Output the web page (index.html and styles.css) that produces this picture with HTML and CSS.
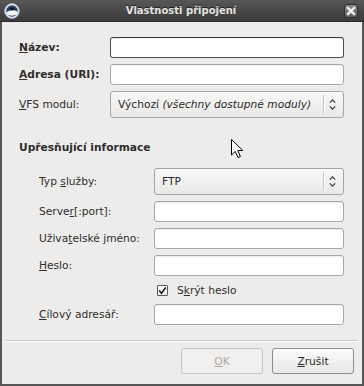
FILE: index.html
```html
<!DOCTYPE html>
<html lang="cs">
<head>
<meta charset="utf-8">
<title>Vlastnosti připojení</title>
<link rel="stylesheet" href="styles.css">
</head>
<body>
<div class="window">
  <div class="titlebar">
    <svg class="app-icon" width="16" height="16" viewBox="0 0 16 16">
      <circle cx="8" cy="8" r="7.4" fill="#e9eef3" stroke="#9fb3c8" stroke-width="0.8"/>
      <circle cx="8" cy="8" r="5.8" fill="#2b4565"/>
      <path d="M2.4 9.6 C5 7.2 9 6.6 13.6 8.4 L13.4 10.6 C11.5 13.4 4.6 13.6 2.6 10.6 Z" fill="#f4f7fa"/>
      <path d="M5 5.2 L9.8 4 L11.4 6.6 L7.4 7.4 Z" fill="#0e1a2a"/>
    </svg>
    <span class="title">Vlastnosti připojení</span>
    <span class="close">
      <svg width="14" height="14" viewBox="0 0 14 14">
        <path d="M4 4 L10 10 M10 4 L4 10" stroke="#f2f2f2" stroke-width="2.4" stroke-linecap="square"/>
      </svg>
    </span>
  </div>
  <div class="frame">
    <div class="form form-main">
      <label class="lbl lbl-bold"><u>N</u>ázev:</label>
      <div class="entry entry-focus"></div>
      <label class="lbl lbl-bold"><u>A</u>dresa (URI):</label>
      <div class="entry"></div>
      <label class="lbl"><u>V</u>FS modul:</label>
      <div class="combo">
        <span class="combo-text">Výchozí <i>(všechny dostupné moduly)</i></span>
        <span class="combo-sep"></span>
        <svg class="combo-arrows" width="7" height="13" viewBox="0 0 7 13">
          <path d="M0.8 4.6 L3.5 1.8 L6.2 4.6 M0.8 8.4 L3.5 11.2 L6.2 8.4" fill="none" stroke="#3a3a3a" stroke-width="1.2"/>
        </svg>
      </div>
    </div>
    <div class="heading">Upřesňující informace</div>
    <div class="form form-sub">
      <label class="lbl">Typ <u>s</u>lužby:</label>
      <div class="combo">
        <span class="combo-text">FTP</span>
        <span class="combo-sep"></span>
        <svg class="combo-arrows" width="7" height="13" viewBox="0 0 7 13">
          <path d="M0.8 4.6 L3.5 1.8 L6.2 4.6 M0.8 8.4 L3.5 11.2 L6.2 8.4" fill="none" stroke="#3a3a3a" stroke-width="1.2"/>
        </svg>
      </div>
      <label class="lbl">Serve<u>r</u>[:port]:</label>
      <div class="entry"></div>
      <label class="lbl">Uživa<u>t</u>elské jméno:</label>
      <div class="entry"></div>
      <label class="lbl"><u>H</u>eslo:</label>
      <div class="entry"></div>
      <span class="empty"></span>
      <div class="check-row">
        <span class="checkbox">
          <svg width="9" height="9" viewBox="0 0 9 9">
            <path d="M1.2 4.6 L3.4 7.2 L7.8 1.4" fill="none" stroke="#1a1a1a" stroke-width="1.6"/>
          </svg>
        </span>
        <span class="check-label">S<u>k</u>rýt heslo</span>
      </div>
      <label class="lbl"><u>C</u>ílový adresář:</label>
      <div class="entry"></div>
    </div>
    <div class="separator"></div>
    <div class="actions">
      <button class="btn" disabled><u>O</u>K</button>
      <button class="btn btn-active"><u>Z</u>rušit</button>
    </div>
  </div>
  <svg class="cursor" width="13" height="20" viewBox="0 0 13 20">
    <path d="M0.5 0.5 L0.5 16 L4.3 12.4 L7 18.6 L9.4 17.6 L6.8 11.5 L11.8 11.5 Z" fill="#fff" stroke="#000" stroke-width="1" stroke-linejoin="miter"/>
  </svg>
</div>
</body>
</html>
```

FILE: styles.css
```css
* { box-sizing: border-box; }

html, body {
  margin: 0;
  padding: 0;
  background: #edeceb;
}

body {
  font-family: "DejaVu Sans", "Liberation Sans", sans-serif;
  font-size: 10.67px;
  color: #2e2e2e;
}

.window {
  position: relative;
  width: 364px;
  height: 386px;
  display: flex;
  flex-direction: column;
  overflow: hidden;
}

.titlebar {
  height: 22px;
  flex: none;
  display: flex;
  align-items: center;
  padding: 0 6px 0 4px;
  background: linear-gradient(#575757, #3b3b3b);
  border-bottom: 1px solid #2c2c2c;
}

.app-icon { flex: none; }

.title {
  flex: 1;
  text-align: center;
  font-weight: bold;
  font-size: 10px;
  color: #e6e4e0;
  text-shadow: 0 -1px 0 #222;
  padding-right: 2px;
}

.close {
  flex: none;
  width: 14px;
  height: 14px;
  border: 1px solid #2e2e2e;
  border-radius: 3px;
  background: linear-gradient(#8a8a8a, #5e5e5e);
  display: flex;
  align-items: center;
  justify-content: center;
}

.close svg { display: block; margin: -1px; }

.frame {
  flex: 1;
  display: flex;
  flex-direction: column;
  background: #edeceb;
  border-left: 2px solid #565656;
  border-right: 2px solid #565656;
  border-bottom: 2px solid #565656;
  padding: 15px 0 10px 0;
}

.form {
  display: grid;
  row-gap: 6px;
  align-items: center;
}

.form-main {
  margin-left: 17px;
  grid-template-columns: 91px 234px;
}

.form-sub {
  margin-left: 37px;
  grid-template-columns: 115px 190px;
}

.lbl { white-space: nowrap; }
.lbl-bold { font-weight: bold; }

.entry {
  height: 21px;
  background: #fff;
  border: 1px solid #a9a8a6;
  border-radius: 3px;
  box-shadow: inset 0 1px 1px rgba(0, 0, 0, 0.08);
}

.entry-focus {
  border-color: #505050;
  border-top-color: #3a3a3a;
}

.combo {
  height: 27px;
  display: flex;
  align-items: center;
  border: 1px solid #a6a5a3;
  border-radius: 3px;
  background: linear-gradient(#f9f9f8, #e9e8e6);
  padding-left: 7px;
}

.combo-text {
  flex: 1;
  white-space: nowrap;
  overflow: hidden;
  color: #2a2a2a;
}

.combo-sep {
  width: 1px;
  height: 19px;
  background: #c8c7c5;
  box-shadow: 1px 0 0 #fbfbfb;
  margin-right: 5px;
}

.combo-arrows {
  display: block;
  margin-right: 7px;
}

.heading {
  font-weight: bold;
  margin: 23px 0 14px 17px;
  line-height: 13px;
}

.check-row {
  height: 16px;
  display: flex;
  align-items: center;
  padding-left: 3px;
  gap: 9px;
}

.checkbox {
  width: 11px;
  height: 11px;
  border: 1px solid #5a5a5a;
  border-radius: 1px;
  background: linear-gradient(#ffffff, #ecebea);
  display: flex;
  align-items: center;
  justify-content: center;
}

.checkbox svg { display: block; }

.separator {
  margin: 15px 4px 0 4px;
  height: 2px;
  border-top: 1px solid #c9c7c4;
  border-bottom: 1px solid #ffffff;
}

.actions {
  margin-top: 6px;
  display: flex;
  justify-content: flex-end;
  gap: 9px;
  padding-right: 8px;
}

.btn {
  width: 82px;
  height: 26px;
  font-family: inherit;
  font-size: 10.67px;
  color: #2a2a2a;
  border: 1px solid #8e8d8b;
  border-radius: 3px;
  background: linear-gradient(#fbfbfb, #e8e7e5);
  padding: 0;
}

.btn:disabled {
  color: #acaaa7;
  border-color: #c6c5c3;
  background: #f0efee;
}

.cursor {
  position: absolute;
  left: 231px;
  top: 139px;
}
```
